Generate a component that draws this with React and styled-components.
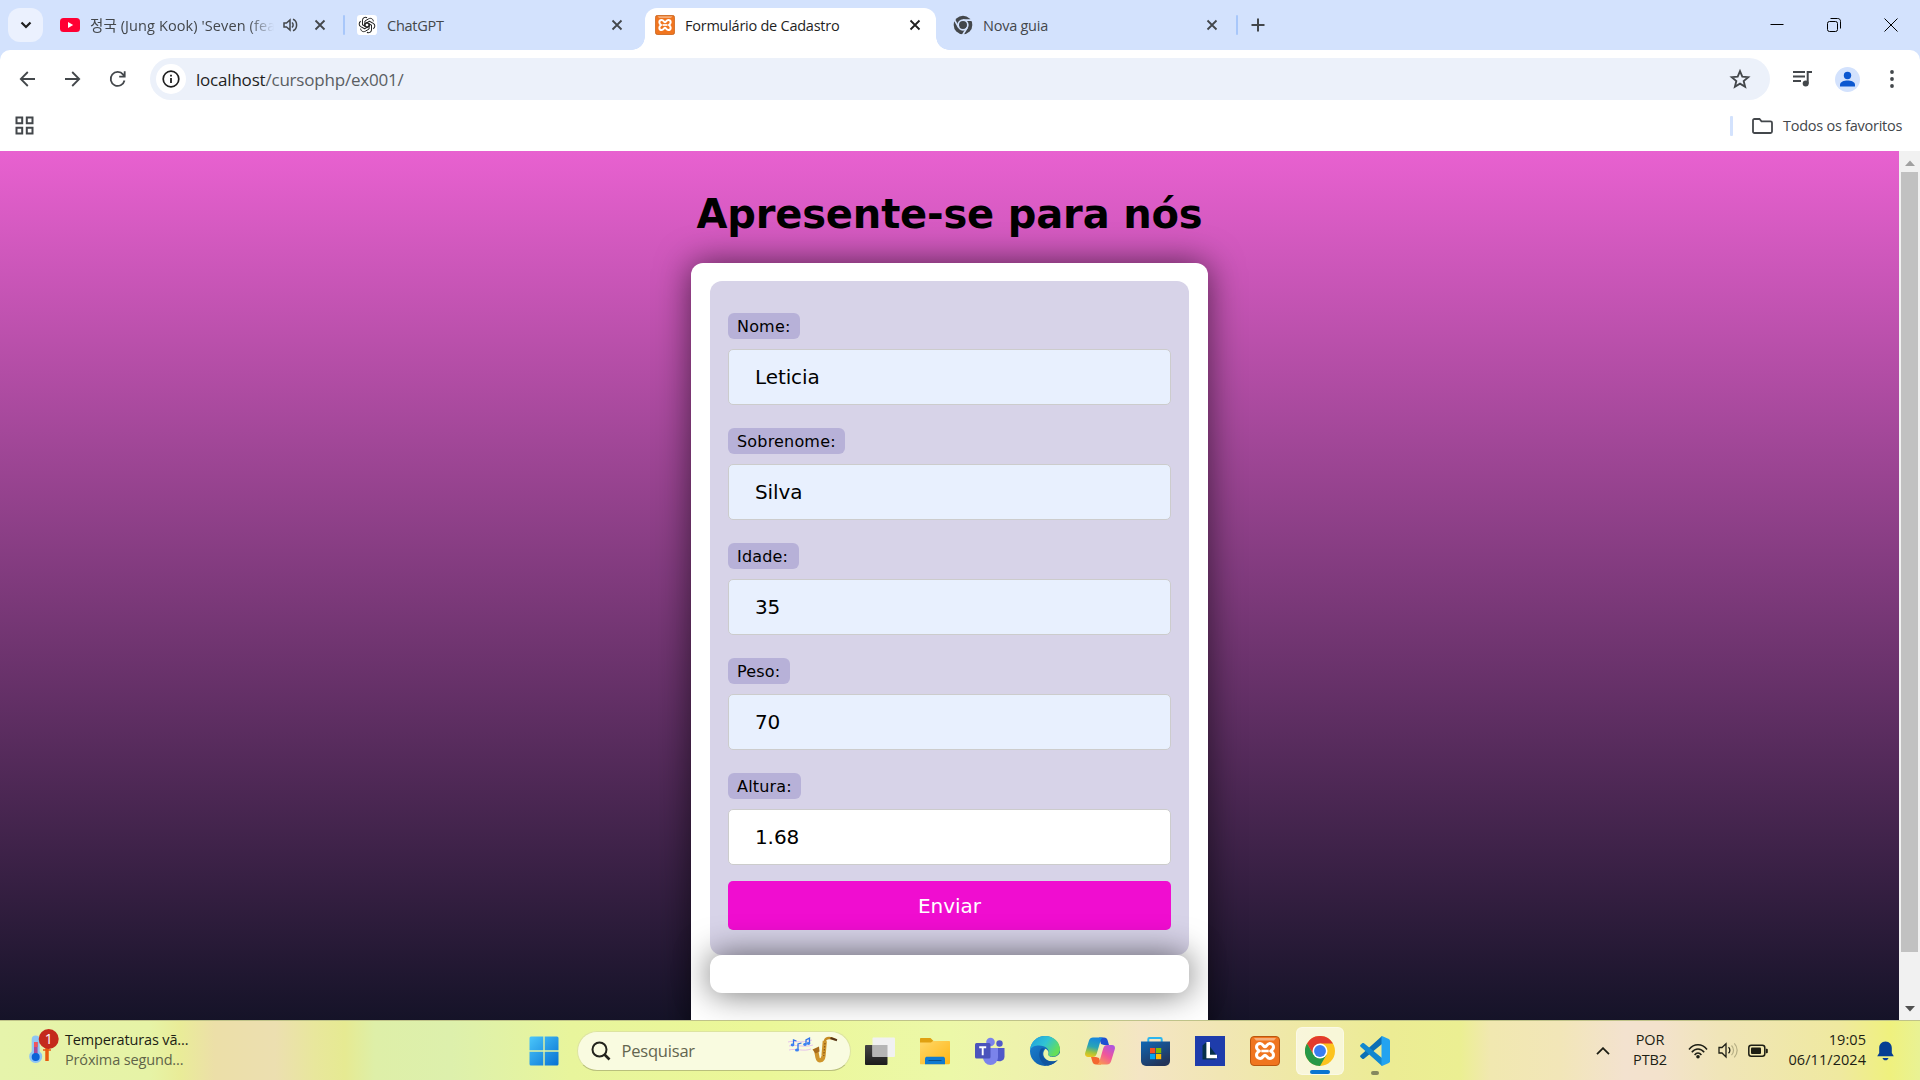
import React from "react";
import styled, { createGlobalStyle } from "styled-components";

const Global = createGlobalStyle`
  * { box-sizing: border-box; }
  html, body { margin: 0; padding: 0; width: 1920px; height: 1080px; overflow: hidden; }
  svg { display: block; flex: none; }
`;

const ui = `"Open Sans", "Noto Sans", "Noto Sans CJK KR", sans-serif`;
const verdana = `"DejaVu Sans", Verdana, sans-serif`;

const Screen = styled.div`
  width: 1920px;
  height: 1080px;
  display: flex;
  flex-direction: column;
  overflow: hidden;
  background: #d3e2fd;
  font-family: ${ui};
  color: #1f1f1f;
`;

/* ---------- browser chrome ---------- */
const TabStrip = styled.div`
  height: 50px;
  flex: none;
  display: flex;
  align-items: center;
  padding-left: 8px;
`;
const TabSearch = styled.div`
  width: 35px;
  height: 34px;
  border-radius: 12px;
  background: #ebf1fe;
  display: flex;
  align-items: center;
  justify-content: center;
`;
const Tab = styled.div`
  width: ${(p) => p.$w}px;
  height: 42px;
  margin-top: ${(p) => (p.$active ? 8 : 0)}px;
  padding-left: ${(p) => p.$pl || 10}px;
  padding-right: ${(p) => p.$pr || 14}px;
  padding-bottom: ${(p) => (p.$active ? 8 : 0)}px;
  display: flex;
  align-items: center;
  position: relative;
  background: ${(p) => (p.$active ? "#fff" : "transparent")};
  border-radius: 12px 12px 0 0;
  &::before, &::after {
    content: "";
    display: ${(p) => (p.$active ? "block" : "none")};
    position: absolute;
    bottom: 0;
    width: 13px;
    height: 13px;
  }
  &::before { left: -13px; background: radial-gradient(circle at 0 0, transparent 12.5px, #fff 13px); }
  &::after { right: -13px; background: radial-gradient(circle at 100% 0, transparent 12.5px, #fff 13px); }
`;
const TabTitle = styled.div`
  flex: 1;
  min-width: 0;
  margin-left: 10px;
  padding-top: 2px;
  overflow: hidden;
  white-space: nowrap;
  font-size: 14.5px;
  line-height: 24px;
  letter-spacing: ${(p) => p.$ls || "-0.25px"};
  color: ${(p) => (p.$active ? "#1f1f1f" : "#43474b")};
  mask-image: ${(p) => (p.$fade ? "linear-gradient(90deg,#000 86%,transparent 100%)" : "none")};
`;
const Gap = styled.div`width: ${(p) => p.$w}px; flex: none;`;
const Divider = styled.div`
  width: ${(p) => p.$w || 2}px;
  height: 20px;
  border-radius: 1px;
  background: ${(p) => p.$c || "#a8c7fa"};
`;
const WindowButtons = styled.div`
  margin-left: auto;
  padding-right: 22px;
  display: flex;
  gap: 43px;
`;
const BrowserBody = styled.div`
  height: 101px;
  flex: none;
  background: #fff;
  border-radius: 10px 10px 0 0;
  display: flex;
  flex-direction: column;
`;
const Toolbar = styled.div`
  height: 58px;
  display: flex;
  align-items: center;
  padding-left: 18px;
`;
const NavIcons = styled.div`
  display: flex;
  gap: 25px;
  width: 132px;
`;
const Omnibox = styled.div`
  width: 1620px;
  height: 42px;
  border-radius: 21px;
  background: #ecf1fa;
  display: flex;
  align-items: center;
  padding: 0 19px 0 6px;
`;
const InfoBubble = styled.div`
  width: 30px;
  height: 30px;
  border-radius: 50%;
  background: #fff;
  display: flex;
  align-items: center;
  justify-content: center;
`;
const Url = styled.div`
  margin-left: 10px;
  padding-top: 1px;
  flex: 1;
  font-size: 17px;
  line-height: 26px;
  letter-spacing: -0.2px;
  color: #1f1f1f;
  span { color: #5a5e62; }
`;
const Avatar = styled.div`
  width: 25px;
  height: 30px;
  margin-left: 22px;
  display: flex;
  align-items: center;
`;
const Bookmarks = styled.div`
  height: 35px;
  display: flex;
  align-items: center;
  padding: 0 18px 0 15px;
`;
const BookmarkText = styled.div`
  font-size: 14.5px;
  line-height: 20px;
  letter-spacing: -0.25px;
  margin-left: 10px;
  width: 119px;
  white-space: nowrap;
  color: #43474b;
`;

/* ---------- page ---------- */
const Viewport = styled.div`
  height: 869px;
  flex: none;
  display: flex;
`;
const Page = styled.div`
  width: 1899px;
  height: 869px;
  overflow: hidden;
  display: flex;
  flex-direction: column;
  align-items: center;
  background: linear-gradient(180deg, #e861d0, #151328);
  font-family: ${verdana};
  color: #000;
`;
const Heading = styled.h1`
  margin: 37px 0 0;
  height: 75px;
  flex: none;
  font-size: 40px;
  line-height: 52px;
  font-weight: 700;
  letter-spacing: -0.17px;
  white-space: nowrap;
`;
const Main = styled.main`
  width: 517px;
  height: 840px;
  flex: none;
  padding: 18px 19px;
  border-radius: 12px;
  background: #fff;
  box-shadow: 0 0 34px rgba(0, 0, 0, 0.59);
`;
const Form = styled.form`
  height: 674px;
  padding: 32px 18px 0;
  border-radius: 12px;
  background: #d7d3e8;
  display: flex;
  flex-direction: column;
`;
const Field = styled.div`
  height: 115px;
  display: flex;
  flex-direction: column;
  align-items: flex-start;
`;
const Label = styled.label`
  width: ${(p) => p.$w}px;
  height: 26px;
  padding: 0 9px;
  border-radius: 6px;
  background: #b7b1d8;
  font-size: 16px;
  line-height: 27px;
  letter-spacing: 0.18px;
  white-space: nowrap;
`;
const Input = styled.input`
  width: 443px;
  height: 56px;
  margin: 10px 0 0;
  padding: 0 26px;
  border: 1px solid #ccc;
  border-radius: 5px;
  outline: none;
  background: ${(p) => (p.$plain ? "#fff" : "#e8f0fe")};
  font: 20px ${verdana};
  letter-spacing: -0.1px;
  color: #000;
`;
const Submit = styled.button`
  height: 49px;
  margin-top: -7px;
  border: 0;
  border-radius: 5px;
  background: #f00dd0;
  color: #fff;
  font: 20px ${verdana};
`;
const Result = styled.section`
  position: relative;
  height: 38px;
  border-radius: 12px;
  background: #fff;
  box-shadow: 0 0 34px rgba(0, 0, 0, 0.59);
`;
const Scrollbar = styled.div`
  width: 21px;
  background: #f1f1f1;
  display: flex;
  flex-direction: column;
  align-items: center;
`;
const ScrollArrow = styled.div`
  height: 21px;
  display: flex;
  align-items: center;
  padding-top: 3px;
`;
const Thumb = styled.div`
  width: 17px;
  height: 780px;
  margin-bottom: 45px;
  background: #c1c1c1;
`;

/* ---------- taskbar ---------- */
const Taskbar = styled.div`
  height: 60px;
  flex: none;
  display: flex;
  align-items: center;
  border-top: 1px solid #bfc389;
  background: linear-gradient(90deg, #e6f4ab 0, #e6f3a6 150px, #e9ec98 180px, #ecdfa8 215px, #ecdfb0 275px, #e8e79c 315px, #e6ea92 345px, #deefa8 375px, #ddf0ac 450px, #e8f59c 570px, #ebf798 760px, #ecf8a8 950px, #f0eeb0 1080px, #f4e5c4 1140px, #f1e6b4 1220px, #ecec94 1390px, #ebef92 1460px, #f1e8b0 1490px, #f2e6b8 1560px, #f3e2cf 1625px, #f3e2cc 1660px, #f0e5b8 1720px, #efe99f 1840px, #eff17e 1890px, #e9f294 1920px);
`;
const Weather = styled.div`
  width: 504px;
  padding-left: 28px;
  display: flex;
  align-items: center;
`;
const TwoLines = styled.div`
  display: flex;
  flex-direction: column;
  font-size: 14.5px;
  line-height: 20px;
  margin-bottom: 2px;
  letter-spacing: ${(p) => p.$ls || "-0.15px"};
  text-align: ${(p) => p.$align || "left"};
  width: ${(p) => p.$w}px;
  margin-left: ${(p) => p.$ml || 0}px;
  white-space: nowrap;
  color: #1d1e14;
`;
const Muted = styled.span`color: #606449;`;
const Slot = styled.div`
  width: 55px;
  height: 60px;
  flex: none;
  display: flex;
  align-items: center;
  justify-content: center;
`;
const ActiveTile = styled.div`
  width: 48px;
  height: 48px;
  border-radius: 6px;
  background: rgba(255, 255, 255, 0.6);
  border: 1px solid rgba(255, 255, 255, 0.35);
  display: flex;
  flex-direction: column;
  align-items: center;
  justify-content: space-between;
  padding-top: 8px;
`;
const Stack = styled.div`
  height: 48px;
  padding-top: 9px;
  display: flex;
  flex-direction: column;
  align-items: center;
  justify-content: space-between;
`;
const Pill = styled.div`
  width: ${(p) => p.$w}px;
  height: 4px;
  border-radius: 2px;
  background: ${(p) => p.$c};
`;
const Search = styled.div`
  width: 274px;
  height: 40px;
  margin: 0 2px 0 5px;
  padding: 0 12px 0 13px;
  border: 1px solid #dde4a0;
  border-bottom-color: #b9c07c;
  border-radius: 20px;
  background: #f9fbe0;
  display: flex;
  align-items: center;
`;
const SearchText = styled.div`
  flex: 1;
  margin-left: 11px;
  font-size: 16.5px;
  letter-spacing: -0.2px;
  color: #63654f;
`;
const Tray = styled.div`
  margin-left: auto;
  display: flex;
  align-items: center;
  padding-right: 26px;
`;

/* ---------- icons ---------- */
const Svg = ({ w, h = w, vb, children, ...r }) => (
  <svg width={w} height={h} viewBox={vb || `0 0 ${w} ${h}`} fill="none" {...r}>{children}</svg>
);
const Close = ({ c = "#43474b" }) => (
  <Svg w={12}><path d="M1.500 1.500l9 9M10.500 1.500l-9 9" stroke={c} strokeWidth="1.800" /></Svg>
);
const Xampp = ({ s }) => (
  <Svg w={s} vb="0 0 30 30">
    <rect x=".5" y=".5" width="29" height="29" rx="3.500" fill="#f0751f" stroke="#b9560f" />
    <path d="M4 2h22l-2 2.400H6z" fill="#f7c199" opacity=".75" />
    <path d="M15 10.800c-1.500 0-2.200-3.300-4.800-3.300-2.200 0-3.700 1.500-3.700 3.500 0 1.800 1.200 3 2.800 4-1.600 1-2.800 2.200-2.800 4 0 2 1.500 3.500 3.700 3.500 2.600 0 3.300-3.300 4.800-3.300s2.200 3.300 4.800 3.300c2.200 0 3.700-1.500 3.700-3.500 0-1.800-1.200-3-2.800-4 1.600-1 2.800-2.200 2.800-4 0-2-1.500-3.500-3.700-3.500-2.600 0-3.300 3.300-4.800 3.300z" stroke="#fff" strokeWidth="3" strokeLinejoin="round" />
    <path d="M11.300 15h7.400" stroke="#fff" strokeWidth="2.600" />
  </Svg>
);
const ChromeMono = () => (
  <Svg w={20} vb="0 0 24 24">
    <circle cx="12" cy="12" r="11.200" fill="#43474b" />
    <circle cx="12" cy="12" r="5.800" fill="#43474b" stroke="#d3e2fd" strokeWidth="2" />
    <path d="M12 6.200h11M7 15L1.500 5.500M17 15l-5.600 9.300" stroke="#d3e2fd" strokeWidth="2" />
    <circle cx="12" cy="12" r="3.500" fill="#43474b" />
  </Svg>
);
const OpenAI = () => (
  <Svg w={20} vb="0 0 24 24">
    <rect width="24" height="24" rx="4" fill="#fff" />
    <g stroke="#222" strokeWidth="1.200" strokeLinejoin="round">
      {[0, 60, 120, 180, 240, 300].map((a) => (
        <path key={a} transform={`rotate(${a} 12 12)`} d="M9.500 13.500V7.200l4.600-2.700c2.600-1.400 5.500.4 5.500 3.200M9.500 10.500l2.500-1.450 2.500 1.450" />
      ))}
    </g>
  </Svg>
);
const Teams = () => (
  <Svg w={30} vb="0 0 30 30">
    <circle cx="15.500" cy="6" r="4.300" fill="#7b83eb" />
    <circle cx="24.500" cy="7.500" r="3.200" fill="#5059c9" />
    <path d="M20 12h9.500v8.500a5 5 0 01-9.500 2z" fill="#5059c9" />
    <path d="M8 12h15v9.500a7.500 7.500 0 01-15 0z" fill="#7b83eb" />
    <rect x="0" y="7" width="15.500" height="15.500" rx="1.500" fill="#4b53bc" />
    <path d="M4.200 11.200h7M7.700 11.200v8" stroke="#fff" strokeWidth="1.900" />
  </Svg>
);
const Edge = () => (
  <Svg w={30}>
    <defs>
      <linearGradient id="e1" x1="0" y1="0" x2="1" y2=".5"><stop stopColor="#1c9de0" /><stop offset=".55" stopColor="#30c3d4" /><stop offset="1" stopColor="#66df58" /></linearGradient>
      <linearGradient id="e2" x1="0" y1="0" x2="1" y2="1"><stop stopColor="#1c86d6" /><stop offset="1" stopColor="#0c4f9c" /></linearGradient>
    </defs>
    <circle cx="15" cy="15" r="15" fill="url(#e2)" />
    <path d="M0 14C1 5 7.500 0 15 0c9 0 15 6.400 15 13.200 0 4.400-3.200 7.300-7.400 7.300-3.300 0-5-1.200-4.400-2.400.9-1.700.9-6.400-4.700-7.900C8 8.700 1.800 10 0 14z" fill="url(#e1)" />
    <path d="M18.300 17.700c-.8 1.300.9 3.200 4.600 3.200 3 0 5-1.400 7.100-3.900v7l-2 .3c-3 1.700-10 1.700-13-2-2.600-3.300-2-7 .5-9.600 2.400 1 3.500 3 2.800 5z" fill="#ecf6a8" />
    <path d="M10.500 13.500C7.500 19 10 28 18 29.700c4-.8 8-3.200 10-6-4.500 2.800-11.500 2-14.300-2-2.200-3.200-1.300-6.500.6-9-1.600-.6-3-.4-3.800.8z" fill="#10549f" />
  </Svg>
);
const Copilot = () => (
  <Svg w={30} h={28}>
    <defs>
      <linearGradient id="c1" x1=".4" y1="0" x2=".2" y2="1"><stop stopColor="#1687dd" /><stop offset=".45" stopColor="#2aa5b5" /><stop offset=".75" stopColor="#a4c43a" /><stop offset="1" stopColor="#f4c51c" /></linearGradient>
      <linearGradient id="c2" x1=".8" y1="0" x2=".2" y2="1"><stop stopColor="#ae55e0" /><stop offset=".5" stopColor="#f0559b" /><stop offset="1" stopColor="#fa9950" /></linearGradient>
    </defs>
    <path d="M14 .5h5c2 0 3 1 3.500 2.500L24 8h-5l-3-1z" fill="#1e4fd2" />
    <path d="M16 27.500h-5c-2 0-3-1-3.500-2.500L6 20h5l3 1z" fill="#f4672f" />
    <path d="M8 .5h10c-1.600.7-2.200 2-2.700 4l-3.500 12c-.8 2.500-2 3.500-4 3.500H3c-2.500 0-3.500-2-2.700-4.500L4 3.500C4.700 1.500 6 .5 8 .5z" fill="url(#c1)" />
    <path d="M22 27.500H12c1.600-.7 2.200-2 2.700-4l3.500-12c.8-2.500 2-3.500 4-3.500H27c2.500 0 3.500 2 2.700 4.500L26 24.500c-.7 2-2 3-4 3z" fill="url(#c2)" />
  </Svg>
);
const Store = () => (
  <Svg w={30}>
    <defs><linearGradient id="s1" x1="0" y1="0" x2=".6" y2="1"><stop stopColor="#0f67b4" /><stop offset="1" stopColor="#233459" /></linearGradient></defs>
    <path d="M8.300 6V3.200c0-.8.500-1.200 1.200-1.200h11c.7 0 1.200.4 1.200 1.200V6" stroke="#2cb5ef" strokeWidth="2" />
    <path d="M1 5.500h29V25a5 5 0 01-5 5H6a5 5 0 01-5-5z" fill="url(#s1)" />
    <path d="M10 12h5.200v5.200H10z" fill="#f25022" /><path d="M16 12h5.200v5.200H16z" fill="#7fba00" />
    <path d="M10 18h5.200v5.200H10z" fill="#00a4ef" /><path d="M16 18h5.200v5.200H16z" fill="#ffb900" />
  </Svg>
);
const Chrome = () => (
  <Svg w={30} vb="0 0 48 48">
    <circle cx="24" cy="24" r="24" fill="#fcc31e" />
    <path d="M24 12h20.800A24 24 0 003.200 12l10.400 18z" fill="#e33b2e" />
    <path d="M3.200 12A24 24 0 0024 48l10.400-18H13.600z" fill="#279847" />
    <circle cx="24" cy="24" r="12" fill="#fff" />
    <circle cx="24" cy="24" r="9.500" fill="#3a7df0" />
  </Svg>
);
const VsCode = () => (
  <Svg w={30}>
    <path d="M22 0v8L4 22.700c-.6.500-1.200.5-1.800 0L.6 21.200c-.7-.7-.7-1.300 0-2z" fill="#0c6fb5" />
    <path d="M22 30v-8L4 7.300c-.6-.5-1.200-.5-1.800 0L.6 8.800c-.7.7-.7 1.300 0 2z" fill="#1288d0" />
    <path d="M22 0l6.800 3c.8.400 1.200 1 1.200 1.800v20.400c0 .8-.4 1.400-1.200 1.800L22 30c-.3-.3-.5-.6-.5-1V1c0-.4.200-.7.500-1z" fill="#23a3f0" />
  </Svg>
);

const fields = [
  ["Nome:", "Leticia", 72],
  ["Sobrenome:", "Silva", 117],
  ["Idade:", "35", 71],
  ["Peso:", "70", 62],
  ["Altura:", "1.68", 73],
];

export default function App() {
  return (
    <Screen>
      <Global />
      <TabStrip>
        <TabSearch>
          <Svg w={12} h={8}><path d="M1.500 1.500L6 6l4.500-4.500" stroke="#1f1f1f" strokeWidth="2.200" /></Svg>
        </TabSearch>
        <Tab $w={300} $pl={17} $pr={17}>
          <Svg w={20} h={14}><rect width="20" height="14" rx="3.500" fill="#ff0033" /><path d="M8 4l5.200 3L8 10z" fill="#fff" /></Svg>
          <TabTitle $fade $ls="0.1px">정국 (Jung Kook) 'Seven (feat.</TabTitle>
          <Gap $w={9} />
          <Svg w={15} h={14}>
            <path d="M1 5v4h2.500l3.500 3V2L3.500 5z" stroke="#43474b" strokeWidth="1.500" />
            <path d="M9 4.500c1.500 1.300 1.500 3.700 0 5M10 1.200c4.800 1.800 4.800 9.800 0 11.600" stroke="#43474b" strokeWidth="1.500" />
          </Svg>
          <Gap $w={16} />
          <Close />
        </Tab>
        <Divider />
        <Tab $w={287} $pl={12} $pr={9}>
          <OpenAI />
          <TabTitle>ChatGPT</TabTitle>
          <Close />
        </Tab>
        <Gap $w={13} />
        <Tab $active $w={291} $pl={10} $pr={15}>
          <Xampp s={20} />
          <TabTitle $active>Formulário de Cadastro</TabTitle>
          <Close c="#1f1f1f" />
        </Tab>
        <Tab $w={300} $pl={17} $pr={18}>
          <ChromeMono />
          <TabTitle>Nova guia</TabTitle>
          <Close />
        </Tab>
        <Divider />
        <Gap $w={13} />
        <Svg w={14}><path d="M7 .5v13M.5 7h13" stroke="#43474b" strokeWidth="2" /></Svg>
        <WindowButtons>
          <Svg w={14}><path d="M.5 6.500h13" stroke="#000" /></Svg>
          <Svg w={14}><rect x=".5" y="3.500" width="10" height="10" rx="2" stroke="#000" /><path d="M3.500.500H10.500c2 0 3 1 3 3v7" stroke="#000" /></Svg>
          <Svg w={14}><path d="M.5.500l13 13M13.500.500l-13 13" stroke="#000" /></Svg>
        </WindowButtons>
      </TabStrip>
      <BrowserBody>
        <Toolbar>
          <NavIcons>
            <Svg w={20}><path d="M17 10H3M9.800 3l-7 7 7 7" stroke="#43474b" strokeWidth="1.800" /></Svg>
            <Svg w={20}><path d="M2 10h14M9.200 3l7 7-7 7" stroke="#43474b" strokeWidth="1.800" /></Svg>
            <Svg w={20}><path d="M16.500 11.500A7 7 0 1115.200 5.600L16.500 7.400M16.700 2.200v5.500h-5.500" stroke="#43474b" strokeWidth="1.800" /></Svg>
          </NavIcons>
          <Omnibox>
            <InfoBubble>
              <Svg w={18}><circle cx="9" cy="9" r="7.800" stroke="#1f1f1f" strokeWidth="1.700" /><path d="M9 8v5M9 4.700v1.900" stroke="#1f1f1f" strokeWidth="1.800" /></Svg>
            </InfoBubble>
            <Url>localhost<span>/cursophp/ex001/</span></Url>
            <Svg w={22} vb="0 0 24 24"><path d="M12 3.500l2.500 6 6.500.5-5 4.200 1.600 6.400L12 17.100l-5.600 3.500L8 14.200 3 10l6.500-.5z" stroke="#43474b" strokeWidth="2" /></Svg>
          </Omnibox>
          <Gap $w={23} />
          <Svg w={20} h={18}>
            <path d="M0 2h12M0 6.500h12M0 11h8" stroke="#43474b" strokeWidth="2" />
            <circle cx="12.700" cy="13.500" r="3" fill="#43474b" /><path d="M14.700 13.500V2H19" stroke="#43474b" strokeWidth="2" />
          </Svg>
          <Avatar>
            <Svg w={25}><circle cx="12.500" cy="12.500" r="12.500" fill="#d3e2fd" /><circle cx="12.500" cy="8.500" r="3.700" fill="#0b57d0" /><path d="M5 19.500v-1.800c0-2.800 4-4.200 7.500-4.200s7.500 1.400 7.500 4.200v1.800z" fill="#0b57d0" /></Svg>
          </Avatar>
          <Gap $w={30} />
          <Svg w={4} h={18}><circle cx="2" cy="2" r="1.900" fill="#43474b" /><circle cx="2" cy="9" r="1.900" fill="#43474b" /><circle cx="2" cy="16" r="1.900" fill="#43474b" /></Svg>
        </Toolbar>
        <Bookmarks>
          <Svg w={19}><path d="M1.500 1.500h5.700v5.700H1.500zM11.800 1.500h5.700v5.700h-5.700zM1.500 11.800h5.700v5.700H1.500zM11.800 11.800h5.700v5.700h-5.700z" stroke="#43474b" strokeWidth="2" /></Svg>
          <Gap $w={1696} />
          <Divider $w={3} $c="#d3e2fd" />
          <Gap $w={19} />
          <Svg w={21} h={16}><path d="M1 2.500C1 1.700 1.600 1 2.500 1h5l2 2.300h9c.9 0 1.500.6 1.500 1.400v8.800c0 .8-.6 1.500-1.500 1.500h-16C1.600 15 1 14.300 1 13.500z" stroke="#43474b" strokeWidth="1.800" /></Svg>
          <BookmarkText>Todos os favoritos</BookmarkText>
        </Bookmarks>
      </BrowserBody>

      <Viewport>
        <Page>
          <Heading>Apresente-se para nós</Heading>
          <Main>
            <Form>
              {fields.map(([label, value, w], i) => (
                <Field key={label}>
                  <Label $w={w}>{label}</Label>
                  <Input defaultValue={value} $plain={i === 4} />
                </Field>
              ))}
              <Submit type="button">Enviar</Submit>
            </Form>
            <Result />
          </Main>
        </Page>
        <Scrollbar>
          <ScrollArrow><Svg w={10} h={6}><path d="M0 6l5-5.500L10 6z" fill="#a0a0a0" /></Svg></ScrollArrow>
          <Thumb />
          <ScrollArrow><Svg w={10} h={6}><path d="M0 0l5 5.500L10 0z" fill="#505050" /></Svg></ScrollArrow>
        </Scrollbar>
      </Viewport>

      <Taskbar>
        <Weather>
          <Svg w={32} h={44}>
            <path d="M19 19v13" stroke="#e85a10" strokeWidth="3.500" /><path d="M15 21h8" stroke="#e85a10" strokeWidth="1.500" />
            <path d="M3.700 10.500a4 4 0 018 0v12a6.500 6.500 0 11-8 0z" fill="#8ec5f5" />
            <path d="M6 13h3.600v13H6z" fill="#a64a9a" /><path d="M6 13h3.600v5H6z" fill="#f0555c" /><circle cx="7.700" cy="28" r="4" fill="#0b62d8" />
            <circle cx="20.700" cy="10" r="10" fill="#c42b1c" />
            <text x="20.700" y="15" fontSize="14" textAnchor="middle" fill="#fff" fontFamily="Open Sans">1</text>
          </Svg>
          <TwoLines $ml={5} $w={140}><span>Temperaturas vã...</span><Muted>Próxima segund...</Muted></TwoLines>
        </Weather>
        <Gap $w={12.5} />
        <Slot>
          <Svg w={30}>
            <defs><linearGradient id="w" x1="0" y1="0" x2="30" y2="30" gradientUnits="userSpaceOnUse"><stop stopColor="#4cc8fb" /><stop offset="1" stopColor="#0570d2" /></linearGradient></defs>
            <path d="M.5 2a1.500 1.500 0 011.500-1.500h12.300v13.800H.5zM15.700.500H28A1.500 1.500 0 0129.500 2v12.300H15.700zM.5 15.700h13.800v13.800H2A1.500 1.500 0 01.5 28zM15.700 15.700h13.800V28a1.500 1.500 0 01-1.500 1.500H15.700z" fill="url(#w)" />
          </Svg>
        </Slot>
        <Search>
          <Svg w={20}><circle cx="8.500" cy="8.500" r="7" stroke="#22231c" strokeWidth="2" /><path d="M13.500 13.500l5 5" stroke="#22231c" strokeWidth="2.600" /></Svg>
          <SearchText>Pesquisar</SearchText>
          <Svg w={50} h={30}>
            <path d="M0 6c6-2 12 2 24-2M1 10c7-2 14 2 24-1M1 14c7-2 14 2 22-1" stroke="#e0b6ee" strokeWidth=".8" />
            <path d="M5.500 9V4l3 1M10 14V8l3.500-1M18 8V4l3.500-2v5" stroke="#2f74ea" strokeWidth="1.300" />
            <ellipse cx="4.500" cy="9" rx="1.800" ry="1.400" fill="#3c82f2" /><ellipse cx="9" cy="14" rx="2" ry="1.500" fill="#3c82f2" /><ellipse cx="17" cy="8.500" rx="1.800" ry="1.400" fill="#3c82f2" /><ellipse cx="20.500" cy="7.500" rx="1.800" ry="1.400" fill="#3c82f2" />
            <path d="M47 3.500c-4-2-9-2.500-10 1l-.5 3" stroke="#c58a22" strokeWidth="2.400" />
            <path d="M36.800 5l-1.300 15c-.6 5-5.300 6-6 1.500l-1.500-8" stroke="#cf952c" strokeWidth="4.200" />
            <path d="M37 7l-1.300 13" stroke="#8a5512" strokeWidth="1.200" strokeDasharray="1.500 1.500" />
            <path d="M24.500 13.500l6.500-3 .5 5-4 2z" fill="#a86c1c" /><path d="M42.500 2l6.500 2.200" stroke="#55351a" strokeWidth="2" />
          </Svg>
        </Search>
        <Slot>
          <Svg w={30} h={28}>
            <defs><linearGradient id="tv" x1="0" y1="0" x2="0" y2="1"><stop stopColor="#444" /><stop offset="1" stopColor="#1c1c1c" /></linearGradient></defs>
            <rect y="8" width="22.500" height="20" rx="1" fill="url(#tv)" /><rect x="7.500" y=".5" width="22.500" height="19.500" rx="1" fill="#f1f1f1" /><path d="M7.500 8h15v12h-15z" fill="#b5b5b5" />
          </Svg>
        </Slot>
        <Slot>
          <Svg w={30} h={28}>
            <defs><linearGradient id="f" x1="0" y1="0" x2="1" y2="1"><stop stopColor="#ffd769" /><stop offset="1" stopColor="#ffb714" /></linearGradient></defs>
            <path d="M0 2C0 1.300.5 1 1 1h9.500l3 3V9H0z" fill="#e0a010" /><path d="M0 5.500h11l2-1.500h16c.7 0 1 .4 1 1V26c0 .7-.5 1.200-1 1.200H1A1 1 0 010 26z" fill="url(#f)" />
            <path d="M5 27.200V22c0-1.600 1-2.200 2.200-2.200h15.600c1.200 0 2.200.6 2.200 2.200v5.200z" fill="#0f7bd0" /><path d="M8.500 23.500h13" stroke="#084f8c" />
          </Svg>
        </Slot>
        <Slot><Teams /></Slot>
        <Slot><Edge /></Slot>
        <Slot><Copilot /></Slot>
        <Slot><Store /></Slot>
        <Slot>
          <Svg w={30}><path d="M0 0h30v30H0z" fill="#1e3cab" /><path d="M11.500 6l-4 3.500v14H20l2.500-3z" fill="#06304a" /><path d="M13.200 6v14.500h8.800" stroke="#fff" strokeWidth="3.600" /></Svg>
        </Slot>
        <Slot><Xampp s={30} /></Slot>
        <Slot><ActiveTile><Chrome /><Pill $w={20} $c="#0b75d1" /></ActiveTile></Slot>
        <Slot><Stack><VsCode /><Pill $w={8} $c="#85875e" /></Stack></Slot>
        <Tray>
          <Svg w={14} h={8}><path d="M1 7.200l6-6 6 6" stroke="#1d1e14" strokeWidth="1.800" /></Svg>
          <TwoLines $ml={22} $w={36} $align="center"><span>POR</span><span>PTB2</span></TwoLines>
          <Gap $w={20} />
          <Svg w={20} h={16}>
            <path d="M1 6.500C6 .2 14 .2 19 6.500M3.800 9.200c3.500-4.400 8.900-4.400 12.400 0M6.600 12c2-2.600 4.800-2.600 6.800 0" stroke="#1d1e14" strokeWidth="1.500" /><circle cx="10" cy="13.700" r="1.800" fill="#1d1e14" />
          </Svg>
          <Gap $w={10} />
          <Svg w={20} h={17}>
            <path d="M1 5.500v5.500h3l4 4V1.800l-4 3.700z" stroke="#1d1e14" strokeWidth="1.300" /><path d="M10.500 5.300c1.800 1.600 1.800 4.300 0 6" stroke="#1d1e14" strokeWidth="1.300" /><path d="M13.500 3.500c2.700 2.700 2.700 7 0 9.600M16.300 1.300c3.800 4 3.800 10 0 14" stroke="#b5ae84" strokeWidth="1.200" />
          </Svg>
          <Gap $w={10} />
          <Svg w={20} h={14}><rect x=".8" y="1.300" width="16" height="11" rx="2.500" stroke="#1d1e14" strokeWidth="1.500" /><rect x="3" y="3.500" width="10" height="6.600" rx="1" fill="#1d1e14" /><path d="M17.800 4.800h1a1 1 0 011 1v2.400a1 1 0 01-1 1h-1z" fill="#1d1e14" /></Svg>
          <TwoLines $ml={17} $w={81} $align="right" $ls="0.05px"><span>19:05</span><span>06/11/2024</span></TwoLines>
          <Gap $w={11} />
          <Svg w={17} h={20}><path d="M8.500.500c4 0 6.300 3 6.300 6.500v5l2 3.200H.2L2.200 12V7C2.200 3.500 4.500.500 8.500.500z" fill="#063f93" /><path d="M5.500 17h6c-.5 1.600-1.600 2.300-3 2.300s-2.500-.7-3-2.300z" fill="#063f93" /></Svg>
        </Tray>
      </Taskbar>
    </Screen>
  );
}
